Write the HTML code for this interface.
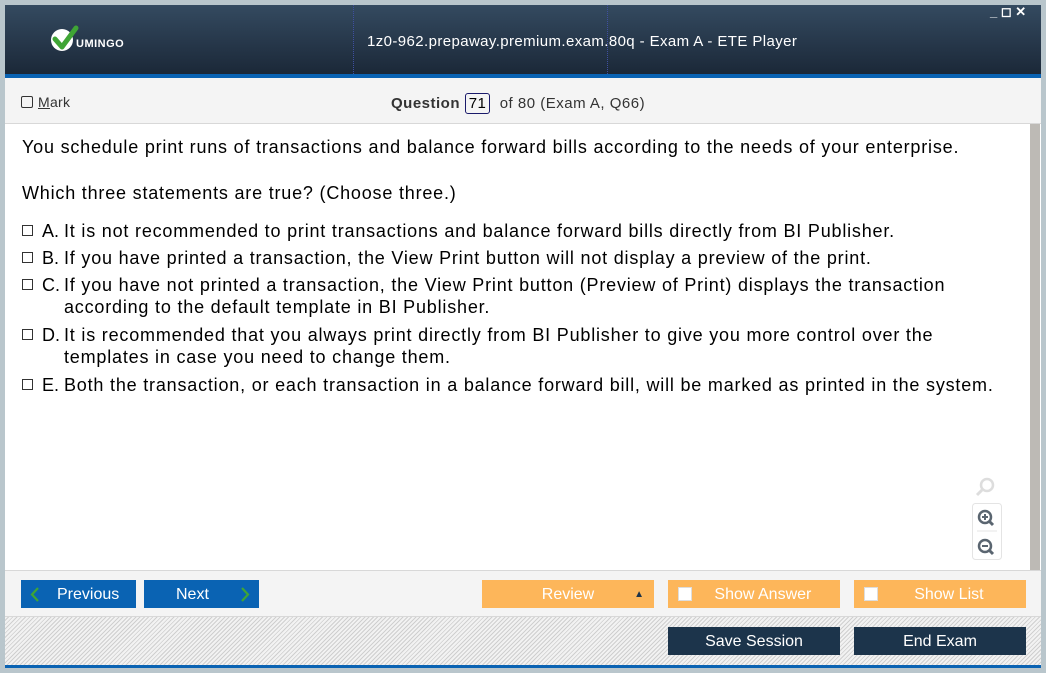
<!DOCTYPE html>
<html><head><meta charset="utf-8"><style>
*{margin:0;padding:0;box-sizing:border-box}
body{width:1046px;height:673px;background:#b9c6cc;position:relative;overflow:hidden;font-family:"Liberation Sans",sans-serif}
.a{position:absolute}
#hdr{left:5px;top:5px;width:1036px;height:69px;background:linear-gradient(#344a60,#1b2838)}
#blue{left:5px;top:74px;width:1036px;height:4px;background:#0a63b3}
#tb{left:5px;top:78px;width:1036px;height:46px;background:#f4f4f4;border-bottom:1px solid #d8d8d8}
#ct{left:5px;top:124px;width:1036px;height:446px;background:#fff}
#sb{left:1030px;top:124px;width:10px;height:446px;background:#bdbab5}
#bb{left:5px;top:570px;width:1036px;height:47px;background:#f4f4f4;border-top:1px solid #d8d8d8;border-bottom:1px solid #d8d8d8}
#hat{left:5px;top:617px;width:1036px;height:48px;background:repeating-linear-gradient(135deg,#f2f2f2 0 2px,#cfcfcf 2px 3px)}
#bl2{left:5px;top:665px;width:1036px;height:3px;background:#0a63b3}
.q{font-size:18px;color:#000;left:22px;line-height:22px;letter-spacing:0.8px;white-space:nowrap}
.opt{left:22px;font-size:18px;line-height:22px;color:#000;letter-spacing:0.8px;white-space:nowrap}
.cb{position:absolute;left:0;top:5px;width:11px;height:11px;border:1px solid #333}
.lb{position:absolute;left:20px;top:0;letter-spacing:0}
.tx{padding-left:42px}
.btn{position:absolute;color:#fff;font-size:16px;text-align:center;line-height:30px;height:28px}
</style></head><body>
<div class="a" id="hdr"></div>
<div class="a" style="left:353px;top:5px;width:1px;height:69px;border-left:1px dotted #3f4fa0"></div>
<div class="a" style="left:607px;top:5px;width:1px;height:69px;border-left:1px dotted #3f4fa0"></div>
<svg class="a" style="left:50px;top:24px" width="32" height="30" viewBox="0 0 32 30"><circle cx="12" cy="16" r="11" fill="#fff"/><path d="M5 15 L12 23 L26 4" stroke="#3fa535" stroke-width="5" fill="none" stroke-linecap="round" stroke-linejoin="round"/></svg>
<div class="a" style="left:76px;top:38px;color:#fff;font-weight:bold;font-size:11px;letter-spacing:0.5px">UMINGO</div>
<div class="a" style="left:367px;top:33px;color:#fff;font-size:15px;letter-spacing:0.4px">1z0-962.prepaway.premium.exam.80q - Exam A - ETE Player</div>
<div class="a" style="left:990px;top:4px;color:#fff;font-size:13px;font-weight:bold">_ ◻ ✕</div>
<div class="a" id="blue"></div>
<div class="a" id="tb"></div>
<div class="a" style="left:21px;top:94px;font-size:14px;color:#333;letter-spacing:0.3px"><span style="display:inline-block;border:1px solid #333;border-radius:2px;width:12px;height:12px;margin-right:5px;vertical-align:-1px"></span><u>M</u>ark</div>
<div class="a" style="left:391px;top:93px;font-size:15px;color:#333;letter-spacing:0.5px"><b>Question</b> <span style="display:inline-block;border:1px solid #1a1a6a;border-radius:3px;padding:1px 3px;color:#000">71</span>&nbsp; of 80 (Exam A, Q66)</div>
<div class="a" id="ct"></div>
<div class="a" id="sb"></div>
<div class="a q" style="top:136px">You schedule print runs of transactions and balance forward bills according to the needs of your enterprise.</div>
<div class="a q" style="top:182px">Which three statements are true? (Choose three.)</div>
<div class="a opt" style="top:220px"><span class="cb"></span><span class="lb">A.</span><div class="tx">It is not recommended to print transactions and balance forward bills directly from BI Publisher.</div></div>
<div class="a opt" style="top:247px"><span class="cb"></span><span class="lb">B.</span><div class="tx">If you have printed a transaction, the View Print button will not display a preview of the print.</div></div>
<div class="a opt" style="top:274px"><span class="cb"></span><span class="lb">C.</span><div class="tx">If you have not printed a transaction, the View Print button (Preview of Print) displays the transaction<br>according to the default template in BI Publisher.</div></div>
<div class="a opt" style="top:324px"><span class="cb"></span><span class="lb">D.</span><div class="tx">It is recommended that you always print directly from BI Publisher to give you more control over the<br>templates in case you need to change them.</div></div>
<div class="a opt" style="top:374px"><span class="cb"></span><span class="lb">E.</span><div class="tx">Both the transaction, or each transaction in a balance forward bill, will be marked as printed in the system.</div></div>
<svg class="a" style="left:972px;top:475px" width="30" height="85" viewBox="0 0 30 85"><circle cx="15" cy="10" r="6" fill="none" stroke="#ddd" stroke-width="2.5"/><line x1="10" y1="15" x2="5" y2="20" stroke="#ddd" stroke-width="3"/><rect x="0.5" y="28.5" width="29" height="56" rx="3" fill="#fff" stroke="#e4e4e4"/><circle cx="13" cy="42" r="6" fill="none" stroke="#5a6570" stroke-width="2.5"/><path d="M10 42h6M13 39v6" stroke="#5a6570" stroke-width="2"/><line x1="17" y1="46" x2="21" y2="50" stroke="#5a6570" stroke-width="3"/><line x1="5" y1="56" x2="25" y2="56" stroke="#e4e4e4"/><circle cx="13" cy="71" r="6" fill="none" stroke="#5a6570" stroke-width="2.5"/><path d="M10 71h6" stroke="#5a6570" stroke-width="2"/><line x1="17" y1="75" x2="21" y2="79" stroke="#5a6570" stroke-width="3"/></svg>
<div class="a" id="bb"></div>
<div class="btn" style="left:21px;top:580px;width:115px;background:#0a63b3"><svg style="position:absolute;left:9px;top:7px" width="10" height="15" viewBox="0 0 10 15"><path d="M8 1L2 7.5L8 14" stroke="#3fa535" stroke-width="2.2" fill="none"/></svg><span style="position:absolute;left:36px">Previous</span></div>
<div class="btn" style="left:144px;top:580px;width:115px;background:#0a63b3"><span style="position:absolute;left:32px">Next</span><svg style="position:absolute;left:96px;top:7px" width="10" height="15" viewBox="0 0 10 15"><path d="M2 1L8 7.5L2 14" stroke="#3fa535" stroke-width="2.2" fill="none"/></svg></div>
<div class="btn" style="left:482px;top:580px;width:172px;background:#fdb65a">Review<span style="position:absolute;right:10px;font-size:10px;color:#1e3449">▲</span></div>
<div class="btn" style="left:668px;top:580px;width:172px;background:#fdb65a"><span style="position:absolute;left:10px;top:7px;width:14px;height:14px;background:#fff;border:1px solid #ddd"></span>&nbsp;&nbsp;&nbsp;&nbsp;Show Answer</div>
<div class="btn" style="left:854px;top:580px;width:172px;background:#fdb65a"><span style="position:absolute;left:10px;top:7px;width:14px;height:14px;background:#fff;border:1px solid #ddd"></span>&nbsp;&nbsp;&nbsp;&nbsp;Show List</div>
<div class="a" id="hat"></div>
<div class="btn" style="left:668px;top:627px;width:172px;background:#1c344b">Save Session</div>
<div class="btn" style="left:854px;top:627px;width:172px;background:#1c344b">End Exam</div>
<div class="a" id="bl2"></div>
</body></html>
